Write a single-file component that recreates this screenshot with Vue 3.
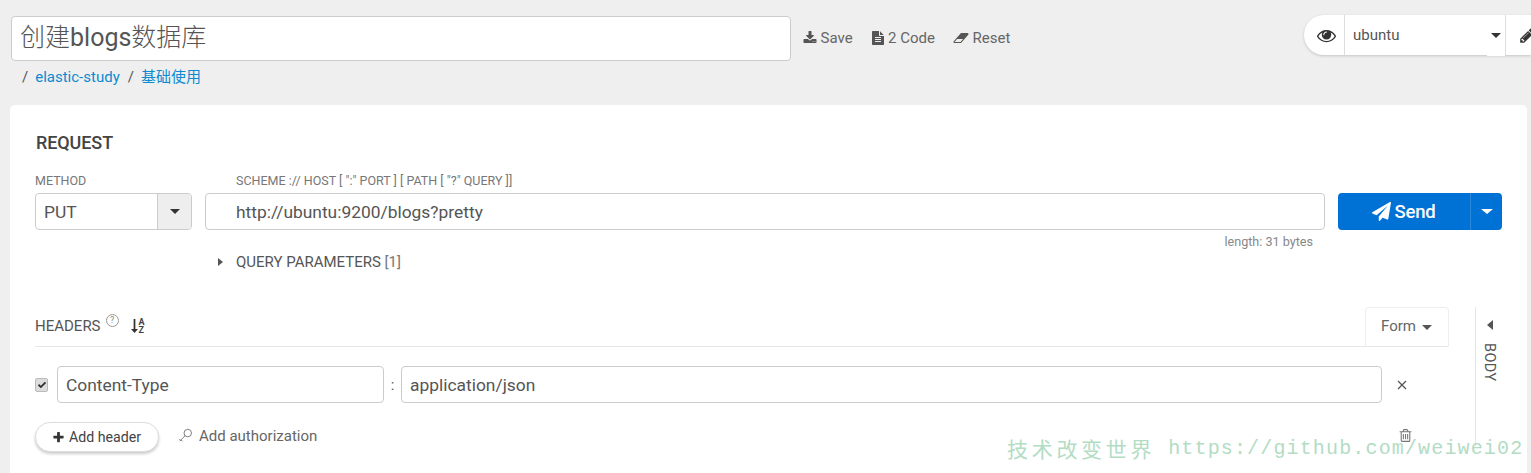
<script setup>
const actions = [
  { label: 'Save', box: '0 0 1792 1792', w: 14, d: 'M1344 1344q0-26-19-45t-45-19-45 19-19 45 19 45 45 19 45-19 19-45zm256 0q0-26-19-45t-45-19-45 19-19 45 19 45 45 19 45-19 19-45zm128-224v320q0 40-28 68t-68 28h-1472q-40 0-68-28t-28-68v-320q0-40 28-68t68-28h465l135 136q58 56 136 56t136-56l136-136h464q40 0 68 28t28 68zm-325-569q17 41-14 70l-448 448q-18 19-45 19t-45-19l-448-448q-31-29-14-70 17-39 59-39h256v-448q0-26 19-45t45-19h256q26 0 45 19t19 45v448h256q42 0 59 39z' },
  { label: '2 Code', box: '0 0 1792 1792', w: 14, d: 'M1596 476q14 14 28 36h-472v-472q22 14 36 28zm-476 164h544v1056q0 40-28 68t-68 28h-1344q-40 0-68-28t-28-68v-1600q0-40 28-68t68-28h800v544q0 40 28 68t68 28zm160 736v-64q0-14-9-23t-23-9h-704q-14 0-23 9t-9 23v64q0 14 9 23t23 9h704q14 0 23-9t9-23zm0-256v-64q0-14-9-23t-23-9h-704q-14 0-23 9t-9 23v64q0 14 9 23t23 9h704q14 0 23-9t9-23zm0-256v-64q0-14-9-23t-23-9h-704q-14 0-23 9t-9 23v64q0 14 9 23t23 9h704q14 0 23-9t9-23z' },
  { label: 'Reset', box: '0 0 2048 1792', w: 16, d: 'M960 1408l336-384h-768l-336 384h768zm1013-1077q15 34 9.5 71.5t-30.5 65.5l-896 1024q-38 44-96 44h-768q-38 0-69.5-20.5t-47.5-54.5q-15-34-9.5-71.5t30.5-65.5l896-1024q38-44 96-44h768q38 0 70 20.5t47 54.5z' }
]
const eye = 'M1664 960q-152-236-381-353 61 104 61 225 0 185-131.5 316.5t-316.5 131.5-316.5-131.5-131.5-316.5q0-121 61-225-229 117-381 353 133 205 333.5 326.5t434.5 121.5 434.5-121.5 333.5-326.5zm-720-384q0-20-14-34t-34-14q-125 0-214.5 89.5t-89.5 214.5q0 20 14 34t34 14 34-14 14-34q0-86 61-147t147-61q20 0 34-14t14-34zm848 384q0 34-20 69-140 230-376.5 368.5t-499.5 138.5-499.5-139-376.5-368q-20-35-20-69t20-69q140-229 376.5-368t499.5-139 499.5 139 376.5 368q20 35 20 69z'
const pencil = 'M491 1536l91-91-235-235-91 91v107h128v128h107zm523-928q0-22-22-22-10 0-17 7l-542 542q-7 7-7 17 0 22 22 22 10 0 17-7l542-542q7-7 7-17zm-54-192l416 416-832 832h-416v-416zm683 96q0 53-37 90l-166 166-416-416 166-165q36-38 90-38 53 0 91 38l235 234q37 39 37 91z'
const plane = 'M1764 11q33 24 27 64l-256 1536q-5 29-32 45-14 8-31 8-11 0-24-5l-453-185-242 295q-18 23-49 23-13 0-22-4-19-7-30.5-23.5t-11.5-36.5v-349l864-1059-1069 925-395-162q-37-14-40-55-2-40 32-59l1664-960q15-9 32-9 20 0 36 11z'
const plus = 'M1600 736v192q0 40-28 68t-68 28h-416v416q0 40-28 68t-68 28h-192q-40 0-68-28t-28-68v-416h-416q-40 0-68-28t-28-68v-192q0-40 28-68t68-28h416v-416q0-40 28-68t68-28h192q40 0 68 28t28 68v416h416q40 0 68 28t28 68z'
const trash = 'M704 736v576q0 14-9 23t-23 9h-64q-14 0-23-9t-9-23v-576q0-14 9-23t23-9h64q14 0 23 9t9 23zm256 0v576q0 14-9 23t-23 9h-64q-14 0-23-9t-9-23v-576q0-14 9-23t23-9h64q14 0 23 9t9 23zm256 0v576q0 14-9 23t-23 9h-64q-14 0-23-9t-9-23v-576q0-14 9-23t23-9h64q14 0 23 9t9 23zm128 724v-948h-896v948q0 22 7 40.5t14.5 27 10.5 8.5h832q3 0 10.5-8.5t14.5-27 7-40.5zm-672-1076h448l-48-117q-7-9-17-11h-317q-10 2-17 11zm928 32v64q0 14-9 23t-23 9h-96v948q0 83-47 143.5t-113 60.5h-832q-66 0-113-58.5t-47-141.5v-952h-96q-14 0-23-9t-9-23v-64q0-14 9-23t23-9h309l70-167q15-37 54-63t79-26h320q40 0 79 26t54 63l70 167h309q14 0 23 9t9 23z'
</script>

<template>
  <div class="page">
    <header class="top">
      <div class="title">创建<span class="title-latin">blogs</span>数据库</div>
      <nav class="actions">
        <span v-for="a in actions" :key="a.label" class="action">
          <svg :viewBox="a.box" :width="a.w" height="14" class="ic"><path :d="a.d" /></svg>{{ a.label }}
        </span>
      </nav>
      <div class="env">
        <span class="env-eye"><svg viewBox="0 0 1792 1792" width="19" height="19" class="ic-dark"><path :d="eye" /></svg></span>
        <span class="env-select">ubuntu<i class="caret caret-dark"></i></span>
        <span class="env-edit"><svg viewBox="0 0 1792 1792" width="17" height="17" class="ic-dark"><path :d="pencil" /></svg></span>
      </div>
    </header>
    <div class="crumbs">
      <span class="sep">/</span><a class="link">elastic-study</a><span class="sep sep2">/</span><a class="link">基础使用</a>
    </div>

    <main class="card">
      <h2 class="heading">REQUEST</h2>
      <div class="request">
        <div class="method-col">
          <div class="label">METHOD</div>
          <div class="method">
            <span class="method-value">PUT</span>
            <span class="method-btn"><i class="caret caret-dark"></i></span>
          </div>
        </div>
        <div class="url-col">
          <div class="label label-url">SCHEME :// HOST [ ":" PORT ] [ PATH [ "?" QUERY ]]</div>
          <div class="url">http://ubuntu:9200/blogs?pretty</div>
          <div class="length">length: 31 bytes</div>
          <div class="query"><i class="tri-right"></i>QUERY PARAMETERS <span class="count">[1]</span></div>
        </div>
        <div class="send-col">
          <div class="send">
            <span class="send-main"><svg viewBox="0 0 1792 1792" width="19" height="19" class="ic-white"><path :d="plane" /></svg>Send</span>
            <span class="send-drop"><i class="caret caret-white"></i></span>
          </div>
        </div>
      </div>

      <section class="lower">
        <div class="headers">
          <div class="headers-bar">
            <span class="headers-title">HEADERS</span>
            <span class="help">?</span>
            <span class="sort">
              <svg viewBox="0 0 8 16" width="7" height="16" class="ic-dark"><path d="M3 0h2v11.5h3l-4 4.5-4-4.5h3z" /></svg>
              <span class="sort-letters"><b>A</b><b>Z</b></span>
            </span>
            <span class="tab">Form<i class="caret caret-mid"></i></span>
          </div>
          <div class="row">
            <span class="check"><svg viewBox="0 0 12 12" width="10" height="10"><path d="M1 6.5l1.6-1.6 2 2L9.4 2 11 3.6 4.6 10z" fill="#333" /></svg></span>
            <div class="field field-name">Content-Type</div>
            <span class="colon">:</span>
            <div class="field field-value">application/json</div>
            <svg class="remove" viewBox="0 0 10 10" width="10" height="10"><path d="M1 1l8 8M9 1l-8 8" stroke="#555" stroke-width="1.3" fill="none" /></svg>
          </div>
          <div class="add-row">
            <span class="add-btn"><svg viewBox="0 0 1792 1792" width="13" height="13" class="ic-dark"><path :d="plus" /></svg>Add header</span>
            <span class="add-auth">
              <svg viewBox="0 0 16 16" width="15" height="15" class="key"><circle cx="10.4" cy="5.4" r="4" /><path d="M7.6 8.2L1.8 14M3.2 12.6l1.6 1.6M1.4 12l1.6 1.6" /></svg>Add authorization
            </span>
            <svg class="trash" viewBox="0 0 1792 1792" width="15" height="15"><path :d="trash" /></svg>
          </div>
        </div>
        <aside class="side">
          <i class="tri-left"></i>
          <span class="side-label">BODY</span>
        </aside>
      </section>
    </main>

    <div class="watermark"><span class="wm-cjk">技术改变世界</span><span class="wm-url">https://github.com/weiwei02</span></div>
  </div>
</template>

<style>
html, body { margin: 0; background: #efefef; }
</style>

<style scoped>
.page {
  position: relative;
  width: 1531px;
  height: 473px;
  overflow: hidden;
  background: #efefef;
  color: #555;
  font-family: Roboto, "Noto Sans CJK SC", sans-serif;
  font-size: 15px;
  box-sizing: border-box;
}
.top {
  display: flex;
  align-items: center;
  height: 45px;
  padding: 16px 0 0 11px;
}
.title {
  flex: none;
  width: 780px;
  height: 45px;
  box-sizing: border-box;
  padding-left: 8px;
  line-height: 42px;
  font-size: 25px;
  font-weight: 300;
  color: #555;
  background: #fff;
  border: 1px solid #ccc;
  border-radius: 4px;
}
.title-latin { font-weight: 400; }
.actions { display: flex; flex: none; margin: -1px 0 0 12px; gap: 18px; color: #666; white-space: nowrap; }
.action { display: flex; align-items: center; gap: 3.5px; }
.ic { fill: #555; }
.ic-dark { fill: #333; }
.ic-white { fill: #fff; }
.env {
  display: flex;
  align-items: stretch;
  flex: none;
  width: 227px;
  height: 40px;
  margin: -7px 0 0 auto;
  background: #fff;
  border-radius: 20px 0 0 20px;
  box-shadow: 0 1px 3px rgba(0, 0, 0, .18);
}
.env-eye {
  display: flex; align-items: center; justify-content: center;
  flex: none;
  width: 41px; padding-left: 4px; box-sizing: border-box;
  border-right: 1px solid #ddd;
}
.env-select {
  display: flex; align-items: center; justify-content: space-between;
  position: relative;
  flex: none;
  width: 161px; box-sizing: border-box;
  padding: 0 4px 0 8px;
  border-right: 1px solid #ddd;
  color: #555;
}
.env-select::after {
  content: "";
  position: absolute;
  right: 0;
  bottom: -1px;
  width: 18px;
  height: 2px;
  background: #fff;
}
.env-edit { display: flex; align-items: center; padding-left: 13px; }
.caret { display: inline-block; width: 0; height: 0; border-style: solid; border-width: 5px 5px 0; border-color: transparent; }
.caret-dark { border-top-color: #333; }
.caret-white { border-top-color: #fff; border-width: 5px 6px 0; }
.caret-mid { border-top-color: #555; margin-left: 6px; vertical-align: middle; }
.crumbs { display: flex; height: 20px; margin-top: 6px; padding-left: 22px; line-height: 20px; }
.sep { color: #555; margin-right: 7px; }
.sep2 { margin-left: 8px; }
.link { color: #0c8bd0; }
.card {
  margin: 18px 4px 0 10px;
  height: 400px;
  padding: 28px 25px 0;
  box-sizing: border-box;
  background: #fff;
  border-radius: 5px;
}
.heading {
  margin: 0 0 19px 1px;
  font-size: 18px;
  line-height: 20px;
  font-weight: 500;
  color: #444;
  letter-spacing: -.1px;
}
.request { display: flex; }
.method-col { width: 157px; flex: none; }
.label { font-size: 12.5px; line-height: 18px; color: #777; margin-bottom: 3px; }
.label-url { padding-left: 31px; }
.method {
  display: flex;
  height: 37px;
  box-sizing: border-box;
  border: 1px solid #ccc;
  border-radius: 4px;
  overflow: hidden;
}
.method-value { flex: 1; padding-left: 8px; line-height: 36px; font-size: 17.4px; }
.method-btn {
  display: flex; align-items: center; justify-content: center;
  box-sizing: border-box;
  width: 34px;
  background: #eee;
  border-left: 1px solid #ccc;
}
.url-col { flex: 1; margin: 0 13px; position: relative; }
.url {
  height: 37px;
  box-sizing: border-box;
  padding-left: 30px;
  line-height: 36px;
  font-size: 17.4px;
  border: 1px solid #ccc;
  border-radius: 4px;
}
.length { text-align: right; padding-right: 12px; margin-top: 5px; font-size: 12.6px; line-height: 14px; color: #888; }
.query { display: flex; align-items: center; margin: 3px 0 0 13px; line-height: 20px; color: #555; white-space: pre; }
.count { color: #777; }
.tri-right { width: 0; height: 0; margin-right: 13px; border-style: solid; border-width: 4.5px 0 4.5px 5px; border-color: transparent transparent transparent #555; }
.send-col { width: 164px; flex: none; padding-top: 21px; }
.send {
  display: flex;
  height: 37px;
  color: #fff;
  background: #0072d6;
  border-radius: 4px;
  font-size: 18.5px;
  font-weight: 500;
}
.send-main { flex: 1; display: flex; align-items: center; justify-content: center; gap: 3px; letter-spacing: -.2px; }
.send-drop { display: flex; align-items: center; justify-content: center; box-sizing: border-box; width: 32px; border-left: 1px solid #2a87da; }
.lower { display: flex; margin-top: 34px; }
.headers { width: 1414px; flex: none; }
.headers-bar {
  display: flex;
  align-items: center;
  height: 40px;
  border-bottom: 1px solid #e6e6e6;
}
.headers-title { color: #555; }
.help {
  flex: none;
  width: 11px; height: 11px; margin: -12px 0 0 5px;
  border: 1px solid #999; border-radius: 50%;
  color: #888; font-size: 9px; line-height: 11px; text-align: center;
}
.sort { display: flex; align-items: center; gap: 1px; margin-left: 12px; }
.sort-letters { display: flex; flex-direction: column; font-size: 9px; line-height: 8px; color: #444; }
.sort-letters b { font-weight: 700; }
.tab {
  align-self: flex-end;
  margin: 0 0 -1px auto;
  width: 84px;
  height: 40px;
  box-sizing: border-box;
  padding-left: 15px;
  line-height: 36px;
  color: #666;
  border: 1px solid #eee;
  border-bottom-color: #e6e6e6;
  border-radius: 4px 4px 0 0;
}
.row { display: flex; align-items: center; margin-top: 19px; }
.check {
  display: flex; align-items: center; justify-content: center;
  width: 13px; height: 14px; margin-right: 9px;
  background: #ddd;
  border: 1px solid #bbb;
  box-sizing: border-box;
  border-radius: 2px;
}
.field {
  height: 37px;
  box-sizing: border-box;
  padding-left: 8px;
  line-height: 36px;
  font-size: 17.4px;
  border: 1px solid #ccc;
  border-radius: 4px;
}
.field-name { width: 327px; }
.colon { width: 17px; text-align: center; }
.field-value { width: 981px; }
.remove { margin-left: 15px; }
.add-row { display: flex; align-items: center; position: relative; margin-top: 19px; }
.add-btn {
  display: flex; align-items: center; gap: 4px;
  width: 124px; height: 30px;
  box-sizing: border-box;
  padding-left: 16px;
  font-size: 14.2px;
  color: #444;
  background: #fff;
  border: 1px solid #ddd;
  border-radius: 15px;
  box-shadow: 0 2px 3px rgba(0, 0, 0, .2);
}
.add-auth { display: flex; align-items: center; gap: 6px; margin: -3px 0 0 19px; color: #666; }
.key { fill: none; stroke: #777; stroke-width: 1; }
.trash { position: absolute; left: 1363px; top: 6px; fill: #777; }
.side {
  flex: none;
  width: 52px;
  height: 139px;
  margin: 1px 0 0 26px;
  box-sizing: border-box;
  border-left: 1px solid #e6e6e6;
  display: flex;
  flex-direction: column;
  padding: 13px 0 0 11px;
  font-size: 14.5px;
  color: #555;
}
.tri-left { width: 0; height: 0; border-style: solid; border-width: 5.5px 6px 5.5px 0; border-color: transparent #555 transparent transparent; margin-bottom: 13px; }
.side-label { align-self: flex-start; writing-mode: vertical-rl; margin-left: -6px; letter-spacing: .4px; }
.watermark {
  position: absolute;
  left: 1007px;
  top: 433px;
  display: flex;
  align-items: center;
  color: #b3dcc4;
  white-space: pre;
}
.wm-cjk { font-family: "Noto Sans CJK SC", sans-serif; font-size: 21px; letter-spacing: 3.7px; margin-right: 13px; }
.wm-url { font-family: "Liberation Mono", monospace; font-size: 20px; letter-spacing: 1.15px; }
</style>
